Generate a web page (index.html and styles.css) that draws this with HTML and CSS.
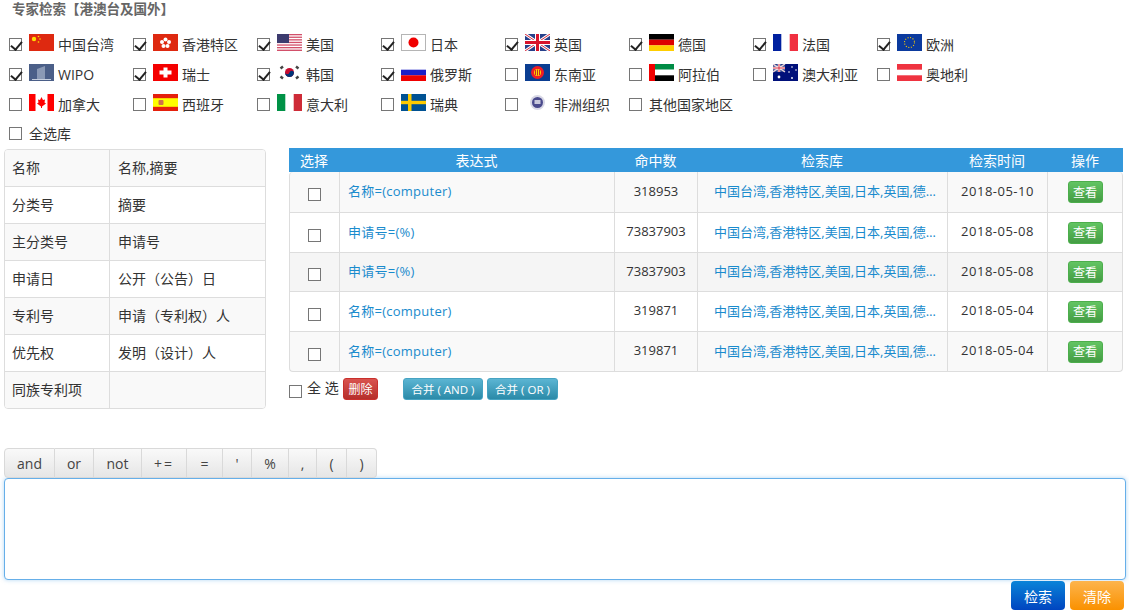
FILE: index.html
```html
<!DOCTYPE html>
<html lang="zh-CN">
<head>
<meta charset="utf-8">
<title>专家检索</title>
<link rel="stylesheet" href="styles.css">
</head>
<body>
<div class="page">
  <h1 class="title">专家检索【港澳台及国外】</h1>
  <div class="libs">
    <label class="lib"><input type="checkbox" checked><svg class="flag" viewBox="0 0 25 17"><rect width="25" height="17" fill="#de2910"/><circle cx="5" cy="5" r="2.2" fill="#ffde00"/><circle cx="9.5" cy="2.5" r=".8" fill="#ffde00"/><circle cx="11" cy="5" r=".8" fill="#ffde00"/><circle cx="9.5" cy="8" r=".8" fill="#ffde00"/></svg><span>中国台湾</span></label>
    <label class="lib"><input type="checkbox" checked><svg class="flag" viewBox="0 0 25 17"><rect width="25" height="17" fill="#de2910"/><g fill="#fff"><circle cx="12.5" cy="5.5" r="2"/><circle cx="9" cy="8" r="2"/><circle cx="16" cy="8" r="2"/><circle cx="10.5" cy="12" r="2"/><circle cx="14.5" cy="12" r="2"/></g><circle cx="12.5" cy="9" r="1" fill="#de2910"/></svg><span>香港特区</span></label>
    <label class="lib"><input type="checkbox" checked><svg class="flag" viewBox="0 0 25 17"><rect width="25" height="17" fill="#fff"/><g fill="#d2506a"><rect width="25" height="1.3"/><rect y="2.6" width="25" height="1.3"/><rect y="5.2" width="25" height="1.3"/><rect y="7.8" width="25" height="1.3"/><rect y="10.4" width="25" height="1.3"/><rect y="13" width="25" height="1.3"/><rect y="15.6" width="25" height="1.4"/></g><rect width="12" height="9" fill="#3c3b6e"/></svg><span>美国</span></label>
    <label class="lib"><input type="checkbox" checked><svg class="flag" viewBox="0 0 25 17"><rect x=".5" y=".5" width="24" height="16" fill="#fff" stroke="#b5b5b5"/><circle cx="12.5" cy="8.5" r="5" fill="#f00000"/></svg><span>日本</span></label>
    <label class="lib"><input type="checkbox" checked><svg class="flag" viewBox="0 0 25 17"><rect width="25" height="17" fill="#27408b"/><path d="M0 0L25 17M25 0L0 17" stroke="#fff" stroke-width="3"/><path d="M0 0L25 17M25 0L0 17" stroke="#d8283c" stroke-width="1"/><path d="M12.5 0V17M0 8.500H25" stroke="#fff" stroke-width="5"/><path d="M12.500 0V17M0 8.500H25" stroke="#d8142c" stroke-width="3"/></svg><span>英国</span></label>
    <label class="lib"><input type="checkbox" checked><svg class="flag" viewBox="0 0 25 17"><rect width="25" height="5.700" fill="#000"/><rect y="5.700" width="25" height="5.700" fill="#dd0000"/><rect y="11.300" width="25" height="5.700" fill="#ffce00"/></svg><span>德国</span></label>
    <label class="lib"><input type="checkbox" checked><svg class="flag" viewBox="0 0 25 17"><rect width="25" height="17" fill="#fff"/><rect width="8.300" height="17" fill="#00209f"/><rect x="16.700" width="8.300" height="17" fill="#f03040"/></svg><span>法国</span></label>
    <label class="lib"><input type="checkbox" checked><svg class="flag" viewBox="0 0 25 17"><rect width="25" height="17" fill="#0b3a9e"/><circle cx="12.500" cy="8.500" r="5" fill="none" stroke="#ffcc00" stroke-width="1.100" stroke-dasharray="1 1.620"/></svg><span>欧洲</span></label>

    <label class="lib"><input type="checkbox" checked><svg class="flag" viewBox="0 0 25 17"><rect width="25" height="17" fill="#4b5f88"/><path d="M8 15V5L16 2V15Z" fill="#8a99b5"/><path d="M3 15H22V16H3Z" fill="#c5cedd"/></svg><span>WIPO</span></label>
    <label class="lib"><input type="checkbox" checked><svg class="flag" viewBox="0 0 25 17"><rect width="25" height="17" fill="#f40000"/><path d="M10.500 3.500H14.500V6.500H18.500V10.500H14.500V13.500H10.500V10.500H6.500V6.500H10.500Z" fill="#fff"/></svg><span>瑞士</span></label>
    <label class="lib"><input type="checkbox" checked><svg class="flag" viewBox="0 0 25 17"><rect width="25" height="17" fill="#fff"/><circle cx="12.500" cy="8.500" r="4.500" fill="#c60c30"/><path d="M8 8.500A2.300 2.300 0 0 0 12.500 8.500A2.300 2.300 0 0 1 17 8.500A4.500 4.500 0 0 1 8 8.500Z" fill="#003478"/><g stroke="#444" stroke-width="2.500"><path d="M3.500 4.500L6 2.500"/><path d="M19 2.500L21.500 4.500"/><path d="M3.500 12.500L6 14.500"/><path d="M19 14.500L21.500 12.500"/></g></svg><span>韩国</span></label>
    <label class="lib"><input type="checkbox" checked><svg class="flag" viewBox="0 0 25 17"><rect width="25" height="5.700" fill="#fff"/><rect y="5.700" width="25" height="5.700" fill="#1c1fc8"/><rect y="11.300" width="25" height="5.700" fill="#f00000"/></svg><span>俄罗斯</span></label>
    <label class="lib"><input type="checkbox"><svg class="flag" viewBox="0 0 25 17"><rect width="25" height="17" fill="#0a3d91"/><circle cx="12.500" cy="8.500" r="6.500" fill="#f01c24"/><circle cx="12.500" cy="8.500" r="3.500" fill="#ffd400"/><path d="M12.500 5.500V11.500M10.500 6V11M14.500 6V11" stroke="#c03020"/></svg><span>东南亚</span></label>
    <label class="lib"><input type="checkbox"><svg class="flag" viewBox="0 0 25 17"><rect width="25" height="5.700" fill="#008c45"/><rect y="5.700" width="25" height="5.700" fill="#fff"/><rect y="11.300" width="25" height="5.700" fill="#000"/><rect width="6" height="17" fill="#f00000"/></svg><span>阿拉伯</span></label>
    <label class="lib"><input type="checkbox"><svg class="flag" viewBox="0 0 25 17"><rect width="25" height="17" fill="#00107a"/><rect width="12" height="8" fill="#27408b"/><path d="M0 0L12 8M12 0L0 8" stroke="#e8d0d8" stroke-width="1.500"/><path d="M6 0V8M0 4H12" stroke="#fff" stroke-width="2.500"/><path d="M6 0V8M0 4H12" stroke="#d8283c"/><g fill="#fff"><circle cx="6" cy="13" r="1.400"/><circle cx="19" cy="3" r=".8"/><circle cx="23" cy="6" r=".8"/><circle cx="16" cy="8" r=".8"/><circle cx="19" cy="14" r=".9"/></g></svg><span>澳大利亚</span></label>
    <label class="lib"><input type="checkbox"><svg class="flag" viewBox="0 0 25 17"><rect width="25" height="17" fill="#fff"/><rect width="25" height="5.700" fill="#ef3340"/><rect y="11.300" width="25" height="5.700" fill="#ef3340"/></svg><span>奥地利</span></label>

    <label class="lib"><input type="checkbox"><svg class="flag" viewBox="0 0 25 17"><rect width="25" height="17" fill="#fff"/><rect width="6.500" height="17" fill="#ff0000"/><rect x="18.500" width="6.500" height="17" fill="#ff0000"/><path d="M12.500 3L14 6L16 5.500L15.500 8.500L17 9.500L13 12.500V14H12V12.500L8 9.500L9.500 8.500L9 5.500L11 6Z" fill="#ff0000"/></svg><span>加拿大</span></label>
    <label class="lib"><input type="checkbox"><svg class="flag" viewBox="0 0 25 17"><rect width="25" height="17" fill="#e5200c"/><rect y="4.200" width="25" height="8.600" fill="#ffff00"/><rect x="5.500" y="6" width="5" height="5" rx="1" fill="#d0704a"/></svg><span>西班牙</span></label>
    <label class="lib"><input type="checkbox"><svg class="flag" viewBox="0 0 25 17"><rect width="25" height="17" fill="#fff"/><rect width="8.300" height="17" fill="#009246"/><rect x="16.700" width="8.300" height="17" fill="#ce2b37"/></svg><span>意大利</span></label>
    <label class="lib"><input type="checkbox"><svg class="flag" viewBox="0 0 25 17"><rect width="25" height="17" fill="#005293"/><rect x="7" width="3.500" height="17" fill="#fecb00"/><rect y="6.800" width="25" height="3.400" fill="#fecb00"/></svg><span>瑞典</span></label>
    <label class="lib"><input type="checkbox"><svg class="flag" viewBox="0 0 25 17"><circle cx="12.500" cy="8.500" r="7.500" fill="#d8d8e6"/><circle cx="12.500" cy="8.500" r="5.500" fill="#4a4a8c"/><rect x="9.500" y="6" width="6" height="4" fill="#c8c8dc"/></svg><span>非洲组织</span></label>
    <label class="lib"><input type="checkbox"><span>其他国家地区</span></label>
  </div>
  <label class="lib all"><input type="checkbox"><span>全选库</span></label>

  <div class="panels">
    <table class="fields">
      <tbody>
        <tr><td>名称</td><td>名称,摘要</td></tr>
        <tr><td>分类号</td><td>摘要</td></tr>
        <tr><td>主分类号</td><td>申请号</td></tr>
        <tr><td>申请日</td><td>公开<span class="paren">（</span>公告<span class="paren">）</span>日</td></tr>
        <tr><td>专利号</td><td>申请<span class="paren">（</span>专利权<span class="paren">）</span>人</td></tr>
        <tr><td>优先权</td><td>发明<span class="paren">（</span>设计<span class="paren">）</span>人</td></tr>
        <tr><td>同族专利项</td><td></td></tr>
      </tbody>
    </table>

    <div class="history">
      <table class="results">
        <thead>
          <tr><th>选择</th><th>表达式</th><th>命中数</th><th>检索库</th><th>检索时间</th><th>操作</th></tr>
        </thead>
        <tbody>
          <tr><td><input type="checkbox"></td><td class="link">名称=(computer)</td><td class="num">318953</td><td class="link db">中国台湾,香港特区,美国,日本,英国,德国,法国,欧洲</td><td class="date">2018-05-10</td><td><button class="btn green">查看</button></td></tr>
          <tr><td><input type="checkbox"></td><td class="link">申请号=(%)</td><td class="num">73837903</td><td class="link db">中国台湾,香港特区,美国,日本,英国,德国,法国,欧洲</td><td class="date">2018-05-08</td><td><button class="btn green">查看</button></td></tr>
          <tr><td><input type="checkbox"></td><td class="link">申请号=(%)</td><td class="num">73837903</td><td class="link db">中国台湾,香港特区,美国,日本,英国,德国,法国,欧洲</td><td class="date">2018-05-08</td><td><button class="btn green">查看</button></td></tr>
          <tr><td><input type="checkbox"></td><td class="link">名称=(computer)</td><td class="num">319871</td><td class="link db">中国台湾,香港特区,美国,日本,英国,德国,法国,欧洲</td><td class="date">2018-05-04</td><td><button class="btn green">查看</button></td></tr>
          <tr><td><input type="checkbox"></td><td class="link">名称=(computer)</td><td class="num">319871</td><td class="link db">中国台湾,香港特区,美国,日本,英国,德国,法国,欧洲</td><td class="date">2018-05-04</td><td><button class="btn green">查看</button></td></tr>
        </tbody>
      </table>
      <div class="actions">
        <label class="select-all"><input type="checkbox"><span>全 选</span></label>
        <button class="btn red">删除</button>
        <button class="btn teal and">合并 ( AND )</button>
        <button class="btn teal">合并 ( OR )</button>
      </div>
    </div>
  </div>

  <div class="ops">
    <button class="op op-and">and</button><button class="op op-or">or</button><button class="op op-not">not</button><button class="op op-pe">+=</button><button class="op op-eq">=</button><button class="op op-q">'</button><button class="op op-pc">%</button><button class="op op-c">,</button><button class="op op-l">(</button><button class="op op-r">)</button>
  </div>
  <textarea class="expr"></textarea>
  <div class="submit">
    <button class="big blue">检索</button>
    <button class="big orange">清除</button>
  </div>
</div>
</body>
</html>
```
FILE: styles.css
```css
* { box-sizing: border-box; }
html, body { margin: 0; padding: 0; background: #fff; }
body {
  font-family: "Open Sans", "Noto Sans CJK SC", sans-serif;
  font-size: 14px;
  color: #333;
  overflow: hidden;
}
input[type="checkbox"] {
  appearance: none;
  width: 13px;
  height: 13px;
  margin: 0;
  border: 1px solid #767676;
  border-radius: 0;
  background: #fff;
  position: relative;
}
input[type="checkbox"]:checked::after {
  content: "";
  position: absolute;
  left: 3px;
  top: 0;
  width: 5px;
  height: 9px;
  border: solid #222;
  border-width: 0 2px 2px 0;
  transform: rotate(40deg);
}
.page { width: 1129px; height: 616px; position: relative; }
.title {
  margin: 0;
  height: 30px;
  padding: 0 0 0 12px;
  font-size: 13.500px;
  line-height: 18px;
  font-weight: 700;
  color: #666;
}
.libs {
  display: grid;
  grid-template-columns: repeat(8, 124px);
  grid-auto-rows: 30px;
  padding-left: 9px;
  height: 89px;
}
.lib {
  display: flex;
  align-items: flex-start;
  height: 29px;
  line-height: 30px;
  white-space: nowrap;
}
.lib input[type="checkbox"] { margin: 8px 7px 0 0; flex: none; }
.flag { width: 25px; height: 17px; margin: 4px 4px 0 0; flex: none; }
.lib.all { padding-left: 9px; }
.panels {
  display: flex;
  align-items: flex-start;
  padding-left: 4px;
}
.fields {
  width: 262px;
  height: 259px;
  margin-top: 1px;
  flex: none;
  table-layout: fixed;
  border-collapse: separate;
  border-spacing: 0;
  border: 1px solid #ddd;
  border-radius: 4px;
  overflow: hidden;
}
.fields td {
  height: 37px;
  padding: 0 0 2px 8px;
  border-top: 1px solid #ddd;
  border-left: 1px solid #ddd;
}
.fields tr:first-child td { border-top: 0; height: 36px; }
.fields td:first-child { width: 104px; border-left: 0; padding-left: 7px; }
.fields tr:nth-child(odd) td { background: #f9f9f9; }
.paren { font-family: "Noto Sans CJK TC", sans-serif; }
.history { margin-left: 23px; width: 834px; flex: none; }
.results {
  width: 834px;
  table-layout: fixed;
  border-collapse: separate;
  border-spacing: 0;
}
.results th {
  height: 24px;
  padding: 0;
  background: #3498db;
  color: #fff;
  font-weight: 400;
  text-align: center;
}
.results th:nth-child(1) { width: 50px; }
.results th:nth-child(2) { width: 275px; }
.results th:nth-child(3) { width: 83px; }
.results th:nth-child(4) { width: 250px; }
.results th:nth-child(5) { width: 100px; }
.results td {
  height: 40px;
  padding: 0;
  font-size: 13px;
  text-align: center;
  border-bottom: 1px solid #ddd;
  border-left: 1px solid #ddd;
}
.results tbody tr:first-child td { height: 41px; }
.results tbody tr:nth-child(3) td { height: 39px; }
.results td:last-child { border-right: 1px solid #ddd; }
.results tbody tr:nth-child(odd) td { background: #f9f9f9; }
.results tbody tr:nth-child(3) td { background: #f5f5f5; }
.results tbody tr:first-child td:first-child { border-top-left-radius: 4px; }
.results tbody tr:first-child td:last-child { border-top-right-radius: 4px; }
.results tbody tr:last-child td:first-child { border-bottom-left-radius: 4px; }
.results tbody tr:last-child td:last-child { border-bottom-right-radius: 4px; }
.results td input[type="checkbox"] { vertical-align: middle; margin-top: 2px; }
.results td.num { padding-bottom: 3px; }
.results td.link {
  color: #1a8bcd;
  text-align: left;
  padding: 0 0 3px 8px;
  letter-spacing: .25px;
}
.results td.date { letter-spacing: .5px; padding-bottom: 3px; }
.results td.db {
  padding: 0 10px 3px 16px;
  letter-spacing: 0;
  white-space: nowrap;
  overflow: hidden;
  text-overflow: ellipsis;
}
.btn {
  font-family: inherit;
  height: 22px;
  padding: 0 0 1px;
  color: #fff;
  font-size: 12px;
  border-radius: 3px;
  border: 1px solid transparent;
  vertical-align: middle;
}
.green {
  width: 35px;
  background: linear-gradient(#62c462, #449d44);
  border-color: #4cae4c;
}
.red {
  width: 35px;
  background: linear-gradient(#d9534f, #b52f2b);
  border-color: #c9302c;
}
.teal {
  width: 71px;
  font-size: 11.500px;
  background: linear-gradient(#5bb5d3, #2b8aa8);
  border-color: #46a3c2;
}
.teal.and { width: 80px; margin-left: 21px; }
.actions {
  display: flex;
  align-items: flex-start;
  gap: 4px;
  padding-top: 6px;
  height: 76px;
}
.select-all { display: flex; align-items: flex-start; line-height: 20px; width: 50px; }
.select-all span { margin-top: 0; }
.select-all input[type="checkbox"] { margin: 7px 5px 0 0; flex: none; }
.ops { margin-left: 4px; display: flex; width: 373px; height: 30px; }
.op {
  font-family: inherit;
  font-size: 14px;
  color: #444;
  height: 30px;
  padding: 0;
  border: 1px solid #d9d9d9;
  border-left: 0;
  background: linear-gradient(#f9f9f9, #e6e6e6);
}
.op-and { width: 51px; border-left: 1px solid #d9d9d9; border-radius: 4px 0 0 4px; }
.op-or { width: 39px; }
.op-not { width: 48px; }
.op-pe { width: 45px; letter-spacing: 2px; }
.op-eq { width: 36px; }
.op-q { width: 29px; }
.op-pc { width: 37px; }
.op-c { width: 28px; }
.op-l { width: 30px; }
.op-r { width: 30px; border-radius: 0 4px 4px 0; }
.expr {
  display: block;
  margin-left: 4px;
  width: 1122px;
  height: 102px;
  border: 1px solid #66afe9;
  border-radius: 4px;
  outline: 0;
  resize: none;
  box-shadow: 0 0 4px rgba(102, 175, 233, .5);
  background: #fff;
}
.submit {
  display: flex;
  justify-content: flex-end;
  gap: 5px;
  width: 1124px;
  padding-top: 1px;
}
.big {
  font-family: inherit;
  width: 54px;
  height: 29px;
  padding: 0;
  color: #fff;
  font-size: 14px;
  border: 0;
  border-radius: 4px;
}
.blue { background: linear-gradient(#0a84d8, #0045c0); }
.orange { background: linear-gradient(#fdb44c, #fa9100); }
```
